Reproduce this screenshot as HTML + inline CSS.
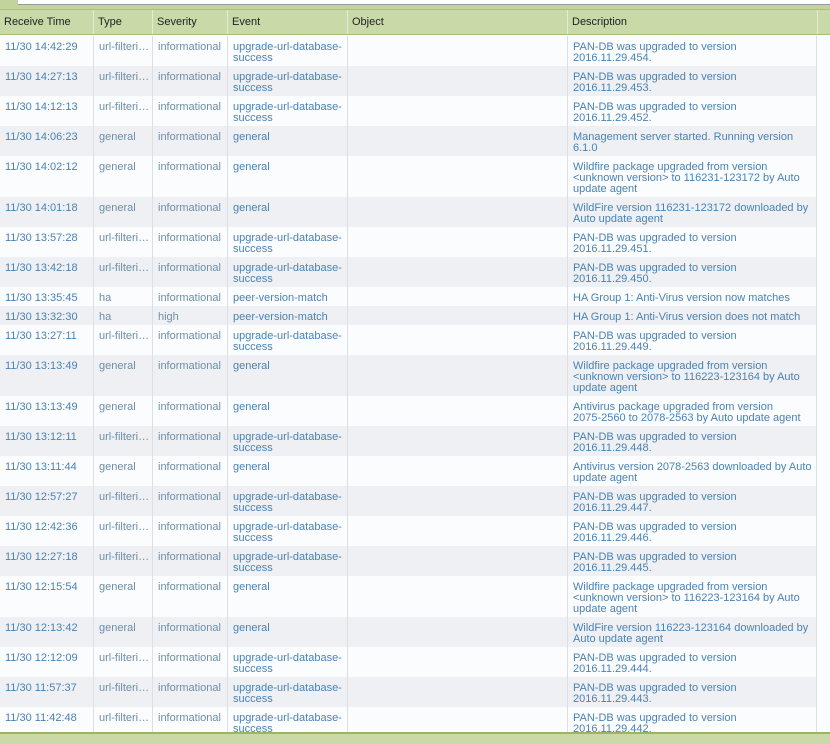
<!DOCTYPE html>
<html><head><meta charset="utf-8"><style>
*{margin:0;padding:0;box-sizing:border-box}
body{width:830px;height:744px;overflow:hidden;background:#fbfcfd;font-family:"Liberation Sans",Tahoma,sans-serif;font-size:11px;position:relative}
.top{position:absolute;left:0;top:0;width:830px;height:10px;background:#c3d39e;border-bottom:1px solid #a9bf7c}
.top .in{position:absolute;left:18px;top:0;width:812px;height:5px;background:#fff;border-bottom:1px solid #999}
.hdr{position:absolute;left:0;top:10px;width:830px;height:25px;background:#c9d9a8;border-bottom:1px solid #a9bf7c}
.hdr div{position:absolute;top:0;height:24px;line-height:25px;padding-left:4px;color:#222;border-right:1px solid #e4ecd4}
.row{position:absolute;left:0;width:817px;border-right:1px solid #dcdfe3}
.row div{position:absolute;top:0;bottom:0;padding:6px 0 0 5px;line-height:11px;color:#4a83b4;border-right:1px solid #dcdfe3;white-space:nowrap;overflow:hidden}
.row .t{color:#6d8ea8}
.alt{background:#eef0f3}
.foot{position:absolute;left:0;top:732px;width:830px;height:12px;background:#c9d9a8;border-top:2px solid #9db466}
</style></head><body>
<div class="top"><div class="in"></div></div>
<div class="hdr">
<div style="left:0;width:94px">Receive Time</div>
<div style="left:94px;width:59px">Type</div>
<div style="left:153px;width:75px">Severity</div>
<div style="left:228px;width:120px">Event</div>
<div style="left:348px;width:220px">Object</div>
<div style="left:568px;width:250px">Description</div>
</div>
<div id="rows"></div>
<div class="foot"></div>
<script>
var U=["url-filteri…","informational","upgrade-url-database-<br>success"];
var data=[
["14:42:29",U,"PAN-DB was upgraded to version<br>2016.11.29.454.",30],
["14:27:13",U,"PAN-DB was upgraded to version<br>2016.11.29.453.",30],
["14:12:13",U,"PAN-DB was upgraded to version<br>2016.11.29.452.",30],
["14:06:23","g","Management server started. Running version<br>6.1.0",30],
["14:02:12","g","Wildfire package upgraded from version<br>&lt;unknown version&gt; to 116231-123172 by Auto<br>update agent",41],
["14:01:18","g","WildFire version 116231-123172 downloaded by<br>Auto update agent",30],
["13:57:28",U,"PAN-DB was upgraded to version<br>2016.11.29.451.",30],
["13:42:18",U,"PAN-DB was upgraded to version<br>2016.11.29.450.",30],
["13:35:45",["ha","informational","peer-version-match"],"HA Group 1: Anti-Virus version now matches",19],
["13:32:30",["ha","high","peer-version-match"],"HA Group 1: Anti-Virus version does not match",19],
["13:27:11",U,"PAN-DB was upgraded to version<br>2016.11.29.449.",30],
["13:13:49","g","Wildfire package upgraded from version<br>&lt;unknown version&gt; to 116223-123164 by Auto<br>update agent",41],
["13:13:49","g","Antivirus package upgraded from version<br>2075-2560 to 2078-2563 by Auto update agent",30],
["13:12:11",U,"PAN-DB was upgraded to version<br>2016.11.29.448.",30],
["13:11:44","g","Antivirus version 2078-2563 downloaded by Auto<br>update agent",30],
["12:57:27",U,"PAN-DB was upgraded to version<br>2016.11.29.447.",30],
["12:42:36",U,"PAN-DB was upgraded to version<br>2016.11.29.446.",30],
["12:27:18",U,"PAN-DB was upgraded to version<br>2016.11.29.445.",30],
["12:15:54","g","Wildfire package upgraded from version<br>&lt;unknown version&gt; to 116223-123164 by Auto<br>update agent",41],
["12:13:42","g","WildFire version 116223-123164 downloaded by<br>Auto update agent",30],
["12:12:09",U,"PAN-DB was upgraded to version<br>2016.11.29.444.",30],
["11:57:37",U,"PAN-DB was upgraded to version<br>2016.11.29.443.",30],
["11:42:48",U,"PAN-DB was upgraded to version<br>2016.11.29.442.",30]
];
var y=36,h="";
data.forEach(function(r,i){
var c=r[1]=="g"?["general","informational","general"]:r[1];
h+='<div class="row'+(i%2?' alt':'')+'" style="top:'+y+'px;height:'+r[3]+'px">'+
'<div style="left:0;width:94px">11/30 '+r[0]+'</div>'+
'<div class="t" style="left:94px;width:59px">'+c[0]+'</div>'+
'<div class="t" style="left:153px;width:75px">'+c[1]+'</div>'+
'<div style="left:228px;width:120px">'+c[2]+'</div>'+
'<div style="left:348px;width:220px"></div>'+
'<div style="left:568px;width:249px;border-right:none">'+r[2]+'</div></div>';
y+=r[3];});
document.getElementById('rows').innerHTML=h;
</script>
</body></html>
